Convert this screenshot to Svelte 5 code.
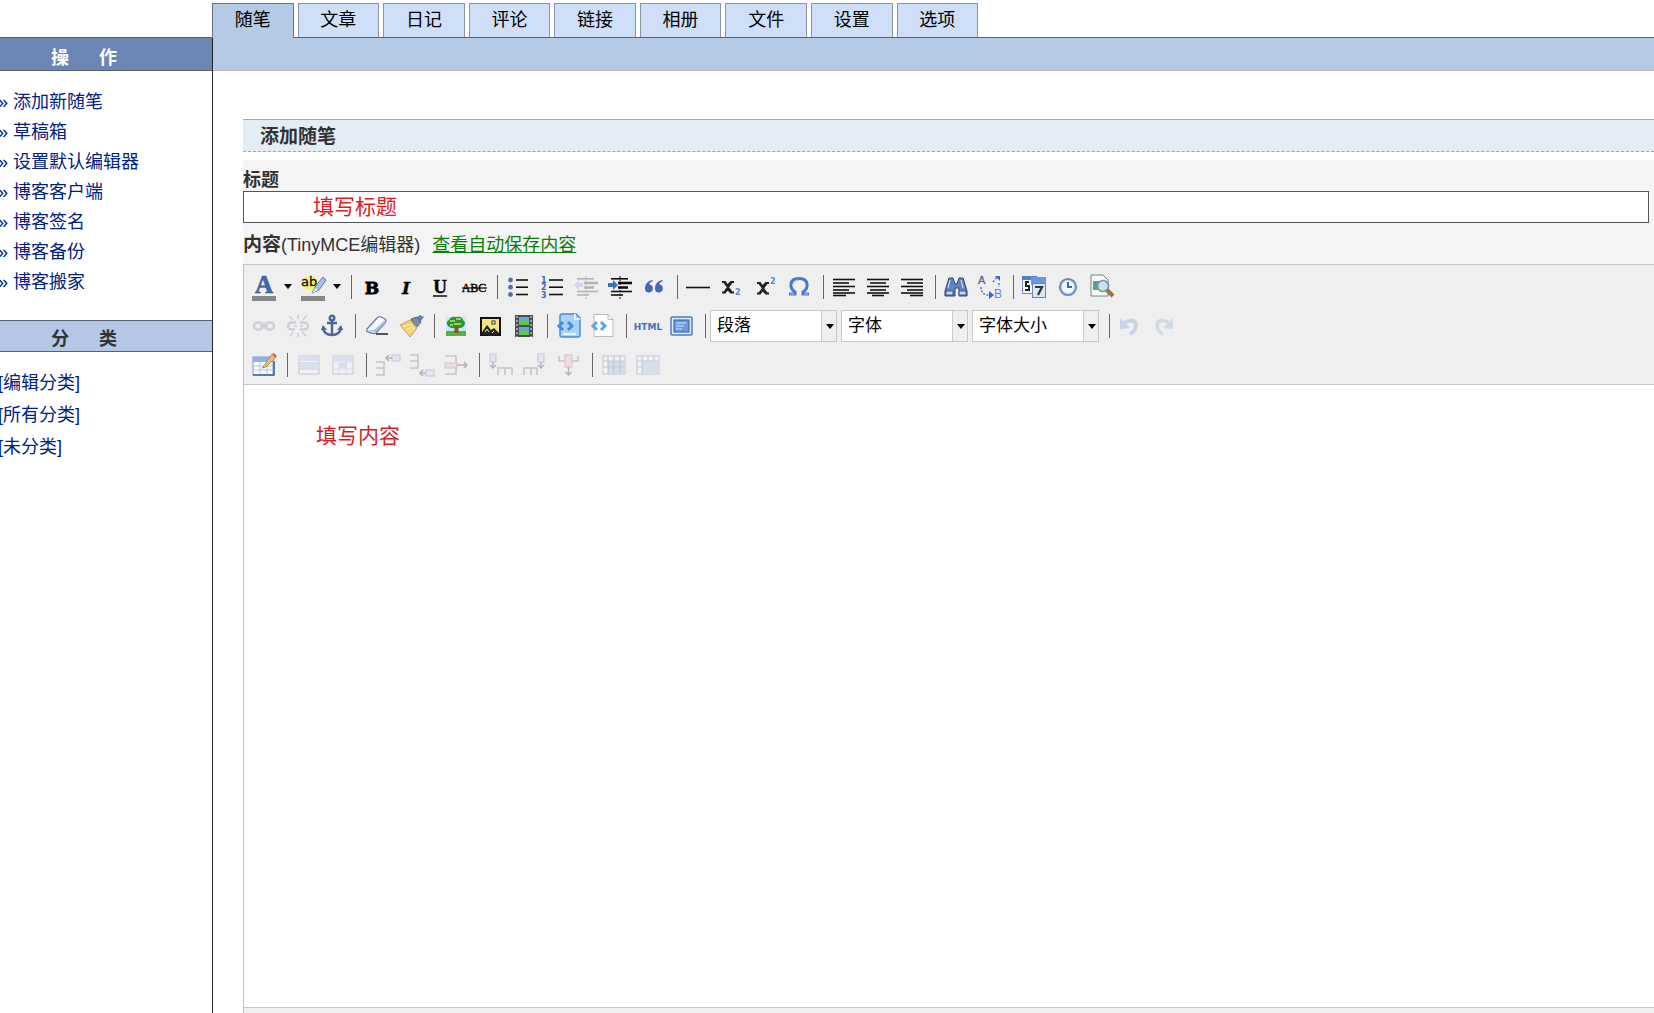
<script>
    const tabs = ["随笔", "文章", "日记", "评论", "链接", "相册", "文件", "设置", "选项"];
    const actions = ["添加新随笔", "草稿箱", "设置默认编辑器", "博客客户端", "博客签名", "博客备份", "博客搬家"];
    const categories = ["编辑分类", "所有分类", "未分类"];

    let active = $state("随笔");
    let title = $state("填写标题");
    let content = $state("填写内容");

    // shared bits of the toolbar icons
    const lines = (rows, color = "#111") =>
        rows.map(([x1, x2, y, w = 1.6]) => `<path d="M${x1} ${y}H${x2}" stroke="${color}" stroke-width="${w}"/>`).join("");
    const indentLines = (color) =>
        lines([[3, 20, 3.8], [10, 24, 8, 2.6], [10, 20, 12.5, 2.6], [3, 24, 16.5], [3, 15, 20]], color) +
        `<path d="M12 1V24" stroke="${color}" stroke-dasharray="2 1.5"/>`;
    const table = (x, y, w, h, fill) =>
        `<rect x="${x}" y="${y}" width="${w}" height="${h}" fill="${fill}" stroke="#c3c8d6"/>`;

    // every icon is drawn on a 24x24 grid
    const icons = {
        forecolor: `<text x="12" y="18" text-anchor="middle" font-family="Liberation Serif" font-weight="bold" font-size="25" fill="#4469a8" stroke="#31528f" stroke-width=".6">A</text><rect y="21" width="24" height="5" fill="#888"/>`,
        backcolor: `<ellipse cx="9" cy="8" rx="9" ry="7" fill="#f6f27a"/><text x="0" y="11" font-family="DejaVu Sans" font-size="13" fill="#111" stroke="#111" stroke-width=".3">ab</text><path d="M22 2L14 12l-3 6 7-3 7-10z" fill="#a9c0e6" stroke="#5876ad"/><path d="M11 18l3-5 3 2z" fill="#f4e9b0"/><rect y="21" width="24" height="5" fill="#888"/>`,
        bold: `<text x="12" y="19" text-anchor="middle" font-family="DejaVu Serif" font-weight="bold" font-size="17" stroke="#000" stroke-width=".8">B</text>`,
        italic: `<text x="12" y="19" text-anchor="middle" font-family="DejaVu Serif" font-weight="bold" font-style="italic" font-size="17" stroke="#000" stroke-width=".4">I</text>`,
        underline: `<text x="12" y="18" text-anchor="middle" font-family="Liberation Serif" font-weight="bold" font-size="19" stroke="#000" stroke-width=".4">U</text><path d="M5 21H19" stroke="#000" stroke-width="1.4"/>`,
        strike: `<text x="12" y="17" text-anchor="middle" font-family="Liberation Serif" font-size="12" stroke="#000" stroke-width=".4">ABC</text><path d="M0 13H25" stroke="#000" stroke-width="1.2"/>`,
        bullist: [5, 12.2, 19.5].map((y) => `<circle cx="4.5" cy="${y}" r="2.4" fill="#5a6ca8"/>`).join("") + lines([[10, 22, 5], [10, 22, 12.2], [10, 22, 19.5]]),
        numlist: [7.5, 15, 23].map((y, i) => `<text x="1" y="${y}" font-family="DejaVu Sans" font-weight="bold" font-size="8" fill="#4967ad">${i + 1}</text>`).join("") + lines([[9, 23, 5], [9, 23, 12.2], [9, 23, 19.5]]),
        outdent: indentLines("#b4b4b4") + `<path d="M0 10l5-5v3h4v4H5v3z" fill="#d3d7e6"/>`,
        indent: indentLines("#111") + `<path d="M10 10L5 5v3H0v4h5v3z" fill="#3f6fc0"/>`,
        quote: `<path d="M10.5 5C5 6 2.500 10 3 14.500a4 4 0 1 0 4.500-5C7 8 8 7 10.500 6.500zM20.500 5C15 6 12.500 10 13 14.500a4 4 0 1 0 4.500-5c-.5-1.500.5-2.500 3-3z" fill="#4468b4"/>`,
        hr: lines([[0, 24, 12.5]]),
        sub: `<path d="M2 7h3l2.500 3.500L11 7h3M2 17.500h3L7.500 14l3.500 3.500h3M4 7l8 10.500M12 7L4 17.500" fill="none" stroke="#222" stroke-width="2"/><text x="15" y="20" font-family="DejaVu Sans" font-weight="bold" font-size="8" fill="#5a86cc">2</text>`,
        sup: `<path d="M3 8h3l2.500 3.500L12 8h3M3 18.500h3l2.500-3.500 3.500 3.500h3M5 8l8 10.500M13 8L5 18.500" fill="none" stroke="#222" stroke-width="2"/><text x="16" y="9" font-family="DejaVu Sans" font-weight="bold" font-size="8" fill="#5a86cc">2</text>`,
        omega: `<path d="M1 19h6v-2C1 13 1 3.500 11 3.500S21 13 15 17v2h6" fill="none" stroke="#4a78c9" stroke-width="3"/><path d="M2 19h4M16 19h4M5 10c0-3 2-5 6-5" fill="none" stroke="#a4c3f2"/>`,
        left: lines([[1, 23, 4.5], [1, 17, 8], [1, 23, 11.5], [1, 17, 15], [1, 23, 18], [1, 14, 20.5]]),
        center: lines([[1, 23, 4.5], [4, 20, 8], [1, 23, 11.5], [4, 20, 15], [1, 23, 18], [6, 18, 20.5]]),
        right: lines([[1, 23, 4.5], [7, 23, 8], [1, 23, 11.5], [7, 23, 15], [1, 23, 18], [10, 23, 20.5]]),
        search: `<path d="M5 3h4l2 6h2l2-6h4l4 13v5h-8v-8h-4v8H1v-5z" fill="#6383be" stroke="#2c4370"/><path d="M2 16h7v4H2zM15 16h7v4h-7z" fill="#c4d9f6" stroke="#38568c"/><path d="M6 5L4 13M17 5l2 8" stroke="#dce9fb"/>`,
        replace: `<text x="0" y="9" font-family="Liberation Sans" font-size="11" fill="#5c6480" stroke="#5c6480" stroke-width=".3">A</text><text x="16" y="23" font-family="Liberation Sans" font-size="12" fill="#6986d8">B</text><path d="M3 12c0 6 3 8 8 8M21 8v4M15 7l4-5" fill="none" stroke="#5273d8" stroke-width="1.5" stroke-dasharray="2 1.5"/><path d="M17 1h5v5zM11 16l5 4-5 4z" fill="#3f62d1"/>`,
        date: `<rect x=".5" y="2.5" width="13" height="16" fill="#f5f8fd" stroke="#7890b8"/><path d="M0 1h15v4H0z" fill="#4f80cf"/><path d="M7 7H4v4h3v4H3" fill="none" stroke="#222" stroke-width="2"/><path d="M9 2h15v8H9z" fill="#6799e2"/><rect x="10.5" y="8.500" width="13" height="14" fill="#dde6f3" stroke="#7186aa"/><path d="M10 8V3h14v5" fill="#6799e2"/><path d="M13 12h7l-4 8" fill="none" stroke="#333" stroke-width="2.2"/>`,
        time: `<circle cx="12" cy="12" r="8" fill="#d9e9fc" stroke="#6c8cbc" stroke-width="2.2"/><circle cx="12" cy="12" r="5.5" fill="#f4f9ff"/><path d="M12 7v5h4" fill="none" stroke="#4165a2" stroke-width="2"/>`,
        preview: `<path d="M1 0h12l5 5v16H1z" fill="#f9fbfb" stroke="#6f8580"/><path d="M3 6h6v9H3z" fill="#5aa18d"/><circle cx="13" cy="11" r="5.5" fill="#c6e3ed" stroke="#82959e" stroke-width="1.6"/><path d="M17 15l6 6" stroke="#9b7440" stroke-width="4"/>`,
        link: `<g fill="none" stroke="#cdd0da" stroke-width="2.5"><rect x="2" y="8.5" width="9" height="7" rx="3.5"/><rect x="13" y="8.5" width="9" height="7" rx="3.5"/><path d="M8 12h8"/></g>`,
        unlink: `<g fill="none" stroke="#cdd0da" stroke-width="2.5"><path d="M10 8.5H5.500a3.500 3.500 0 0 0 0 7H9M14 8.500h4.500a3.500 3.500 0 0 1 0 7H14"/></g><path d="M7 6L3 2M12 5V1M17 6l4-5M7 18l-3 4M12 19v4M16 18l4 4M8 12h3M14 12h3" stroke="#cdd0d8" stroke-width="1.5"/>`,
        anchor: `<g fill="none" stroke="#4c6793" stroke-width="2.4"><circle cx="12" cy="4" r="2.3"/><path d="M12 6v15M7 9h10M3 14c0 4 4 7 9 7s9-3 9-7"/></g><path d="M1 16l2-5 4 5zM17 16l4-5 2 5z" fill="#4c6793"/>`,
        removeformat: `<path d="M2 15L12 4q2-2 4-1l4 2q2 1 0 4L11 19q-2 1-4 0l-4-1q-2-1-1-3z" fill="#f7faff" stroke="#637fae" stroke-width="1.3"/><path d="M3 16l6 0 11-10v3l-9 9-7-1z" fill="#a9c0e6"/><path d="M11 20H23" stroke="#222" stroke-width="1.5"/>`,
        cleanup: `<path d="M17 4l4-3 4 2-4 5z" fill="#6a7fac"/><path d="M12 5l6-2 4 5-5 6z" fill="#7b8ca8" stroke="#576580"/><path d="M1 11l10-5 7 8-7 9z" fill="#ecd27c" stroke="#cda754"/><path d="M4 13l9-3M7 16l8-4M10 19l6-5" stroke="#fff2b2"/>`,
        tree: `<rect x="2" y="2.5" width="20" height="19" fill="#c4e7fb"/><path d="M2 17h20v5H2z" fill="#54b640"/><path d="M4 12q-3-4 1-6 2-4 7-3 6-1 7 3 4 3 0 7-4 2-7 1-5 1-8-2z" fill="#36902d"/><path d="M6 7h5M12 5h5M10 10h7M6 11h3" stroke="#8bd760" stroke-width="2"/><path d="M11 12h3l1 7h-5z" fill="#85582d"/>`,
        image: `<rect x="3" y="4" width="19" height="17" fill="#f3e77b" stroke="#111" stroke-width="2"/><rect x="14" y="7" width="3" height="3" fill="#fff" stroke="#333"/><path d="M4 18l5-7 4 5 3-2 5 5v2H4z" fill="#222"/><path d="M7 18l2-3 2 3M14 19l2-2" stroke="#eee" fill="none"/>`,
        media: `<rect x="3" y="1" width="18" height="22" fill="#4b4e4c"/><path d="M7 3h10v8H7zM7 13h10v8H7z" fill="#5ba8e8"/><path d="M7 8q5-4 10 0v3H7zM7 18q5-4 10 0v3H7z" fill="#60c94b"/><path d="M5 2v21M19 2v21" stroke="#b9b9b9" stroke-width="1.5" stroke-dasharray="2 2"/>`,
        insertcode: `<path d="M3 2q0-2 2-2h14l4 4v18q0 1-2 1H5q-2 0-2-2z" fill="#a9d2f8" stroke="#4a88c9" stroke-width="1.4"/><path d="M18 0v5h5M6 20h13" fill="none" stroke="#e5f3ff" stroke-width="2"/><path d="M6 8l-4 4 4 4M11 8l4 4-4 4" fill="none" stroke="#468cda" stroke-width="3"/>`,
        code: `<path d="M3 .5h14l5 5v17H3z" fill="#fff" stroke="#b9bbbd"/><path d="M17 .5v5h5" fill="none" stroke="#b9bbbd"/><path d="M6 8l-4 4 4 4M10 8l4 4-4 4" fill="none" stroke="#5aa5e6" stroke-width="3"/>`,
        html: `<text x="12" y="16" text-anchor="middle" font-family="DejaVu Sans" font-weight="bold" font-size="9" fill="#4870b0">HTML</text>`,
        fullscreen: `<rect x="1" y="3" width="21" height="18" rx="1" fill="#dbe8fa" stroke="#567bb5" stroke-width="1.5"/><rect x="4" y="6" width="15" height="12" fill="#6c9ae2" stroke="#315da6"/><path d="M6 9h10M6 12h8M6 15h6" stroke="#accbfa" stroke-width="1.5"/>`,
        undo: `<path d="M5 9q11-6 12 2 0 6-6 9" fill="none" stroke="#c9d4e5" stroke-width="4"/><path d="M1 4v11l10-1z" fill="#c9d4e5"/>`,
        redo: `<path d="M17 9Q6 3 4 11q0 6 6 9" fill="none" stroke="#d0d9e5" stroke-width="3.5"/><path d="M20 4v11l-10-1z" fill="#d0d9e5"/>`,
        table: `<rect x="1" y="4" width="20" height="18" fill="#f8fbff" stroke="#7f99c8"/><path d="M1 4h20v5H1z" fill="#8fb0ec"/><path d="M1 13h20M1 17h20M8 9v13M15 9v13" stroke="#b3c8ec"/><path d="M1 22h21V8" fill="none" stroke="#46608c" stroke-width="1.6"/><path d="M11 14L20 1l4 3-10 10-4 1z" fill="#e1c266" stroke="#a08550" stroke-width=".8"/><path d="M20 1l2-1 3 3-2 2z" fill="#d4675e"/>`,
        rowprops: table(2, 3, 20, 18, "#f0f2f8") + `<path d="M2 3h20v5H2zM3 11h18v4H3z" fill="#dadfec"/><path d="M2 10h20M2 16h20" stroke="#c5cbe0"/>`,
        cellprops: table(2, 3, 20, 18, "#f0f2f8") + `<path d="M2 3h20v5H2zM8 10h8v5H8z" fill="#dadfec"/><path d="M2 9h20M2 16h20M8 9v12M15 9v12" stroke="#d8dce6"/>`,
        rowbefore: `<path d="M0 9h8v13H0M0 15h8" fill="none" stroke="#c6c6c6" stroke-width="1.6"/>` + table(16, 2, 8, 6, "#e2e5f2") + `<path d="M16 5h-6m3-3l-3 3 3 3" fill="none" stroke="#b5b5b5" stroke-width="1.5"/>`,
        rowafter: `<path d="M0 2h8v13H0M0 8h8" fill="none" stroke="#c6c6c6" stroke-width="1.6"/>` + table(16, 17, 8, 6, "#e2e5f2") + `<path d="M16 20h-6m3-3l-3 3 3 3" fill="none" stroke="#b5b5b5" stroke-width="1.5"/>`,
        rowdelete: `<path d="M1 3h11v18H1" fill="none" stroke="#c6c6c6" stroke-width="1.6"/><rect x="1" y="10" width="12" height="5" fill="#efdcdd" stroke="#d6c3c5"/><path d="M13 12h10m-3-3l3 3-3 3" fill="none" stroke="#c0adb0" stroke-width="1.5"/>`,
        colbefore: `<path d="M9 22v-7h14v7M16 15v7" fill="none" stroke="#c6c6c6" stroke-width="1.6"/>` + table(1, 1, 6, 8, "#dfe4f6") + `<path d="M4 9v6m-3-3l3 3 3-3" fill="none" stroke="#b5b5b5" stroke-width="1.5"/>`,
        colafter: `<path d="M1 22v-7h13v7M8 15v7" fill="none" stroke="#c6c6c6" stroke-width="1.6"/>` + table(15, 1, 6, 8, "#e2e5f2") + `<path d="M18 9v6m-3-3l3 3 3-3" fill="none" stroke="#b5b5b5" stroke-width="1.5"/>`,
        coldelete: `<path d="M2 3v5h19V3" fill="none" stroke="#c6c6c6" stroke-width="1.6"/><rect x="8" y="2" width="7" height="12" fill="#efdcdd" stroke="#d6c3c5"/><path d="M11.500 14v8m-3-3l3 3 3-3" fill="none" stroke="#b5b5b5" stroke-width="1.5"/>`,
        split: table(1, 3, 22, 18, "#f2f3f5") + `<path d="M6 8h17v12H6z" fill="#d3ddea"/><path d="M1 8h22M1 14h22M6 3v18M12 3v18M18 3v18" stroke="#c4c8ce" stroke-width="1.2"/>`,
        merge: table(1, 3, 22, 18, "#f2f3f5") + `<path d="M6 8h17v12H6z" fill="#d6e0ed"/><path d="M1 8h22M6 3v18M12 3v5M18 3v5M1 14h5" stroke="#c8ccd2" stroke-width="1.2"/>`
    };

    // "|" is a separator, "+name" a button with its own drop-down arrow
    const rows = [
        "+forecolor +backcolor | bold italic underline strike | bullist numlist outdent indent quote | hr sub sup omega | left center right | search replace | date time preview",
        "link unlink anchor | removeformat cleanup | tree image media | insertcode code | html fullscreen | =段落 =字体 =字体大小 | undo redo",
        "table | rowprops cellprops | rowbefore rowafter rowdelete | colbefore colafter coldelete | split merge"
    ].map((row) => row.split(" "));
</script>

{#snippet tool(name)}
    <button class="tool" type="button" aria-label={name}>
        <svg viewBox="0 0 24 24" width="24" height="24">{@html icons[name]}</svg>
    </button>
{/snippet}

<div class="page">
    <nav class="tabs">
        {#each tabs as tab}
            <a href="#{tab}" class:active={tab === active} onclick={() => (active = tab)}>{tab}</a>
        {/each}
    </nav>

    <div class="columns">
        <aside>
            <h2 class="actions"><span>操</span><span>作</span></h2>
            <ul class="actionList">
                {#each actions as item}
                    <li><a href="#{item}">» {item}</a></li>
                {/each}
            </ul>
            <h2 class="sorts"><span>分</span><span>类</span></h2>
            <ul class="sortList">
                {#each categories as item}
                    <li><a href="#{item}">[{item}]</a></li>
                {/each}
            </ul>
        </aside>

        <main>
            <div class="bar"></div>
            <div class="content">
                <h1>添加随笔</h1>
                <form>
                    <label class="titleLabel" for="title">标题</label>
                    <input id="title" type="text" bind:value={title} />

                    <div class="bodyLabel">
                        <label for="body"><b>内容</b>(TinyMCE编辑器)</label>
                        <a href="#autosave">查看自动保存内容</a>
                    </div>

                    <div class="editor">
                        <div class="toolbar">
                            {#each rows as row}
                                <div class="row">
                                    {#each row as item}
                                        {#if item === "|"}
                                            <span class="sep"></span>
                                        {:else if item[0] === "="}
                                            <span class="list">
                                                <select aria-label={item.slice(1)}>
                                                    <option>{item.slice(1)}</option>
                                                </select>
                                            </span>
                                        {:else if item[0] === "+"}
                                            {@render tool(item.slice(1))}
                                            <button class="open" type="button" aria-label="open {item.slice(1)}"></button>
                                        {:else}
                                            {@render tool(item)}
                                        {/if}
                                    {/each}
                                </div>
                            {/each}
                        </div>
                        <textarea id="body" bind:value={content}></textarea>
                        <div class="status"></div>
                    </div>
                </form>
            </div>
        </main>
    </div>
</div>

<style>
:global(body) {
    margin: 0;
    background: #fff;
}

.page {
    display: flex;
    flex-direction: column;
    min-height: 100vh;
    font-family: "Liberation Sans", "Noto Sans CJK SC", sans-serif;
    font-size: 18px;
    color: #333;
}

a {
    color: #002280;
    text-decoration: none;
}

ul {
    list-style: none;
    margin: 0 0 0 -2px;
    padding: 0;
}

/* TABS */
.tabs {
    display: flex;
    gap: 4px;
    width: 766px;
    padding: 3px 0 0 212px;
}

.tabs a {
    flex: 1;
    height: 33px;
    line-height: 33px;
    text-align: center;
    color: #000;
    background: #cfdff7;
    border: 1px solid #8c949c;
    border-bottom: 0;
}

.tabs .active {
    background: #b5cae6;
    border-color: #67757f;
    margin-bottom: -1px;
    padding-bottom: 1px;
    z-index: 1;
}

.columns {
    flex: 1;
    display: flex;
}

/* SIDEBAR */
aside {
    flex: none;
    width: 212px;
    border-right: 1px solid #222;
}

h2 {
    display: flex;
    gap: 30px;
    margin: 0;
    padding-left: 51px;
    font-size: 18px;
    border-top: 1px solid #566274;
    border-bottom: 1px solid #566274;
}

.actions {
    height: 32px;
    line-height: 40px;
    color: #fff;
    background: #6b86b3;
}

.sorts {
    height: 30px;
    line-height: 36px;
    background: #b5c7e6;
}

.actionList {
    padding: 16px 0 23px;
}

.actionList li {
    line-height: 30px;
}

.sortList {
    padding-top: 15px;
}

.sortList li {
    line-height: 32px;
}

/* MAIN */
main {
    flex: 1;
    min-width: 0;
    display: flex;
    flex-direction: column;
}

.bar {
    height: 32px;
    background: #b5cae6;
    border-top: 1px solid #566274;
    border-bottom: 1px solid #b3b5c6;
}

.content {
    flex: 1;
    display: flex;
    flex-direction: column;
    padding: 48px 0 0 30px;
}

h1 {
    height: 31px;
    margin: 0 0 8px;
    padding-left: 17px;
    font-size: 19px;
    line-height: 33px;
    background: #e4ecf5;
    border-top: 1px solid #a3a8ae;
    border-bottom: 1px dashed #a0a8aa;
}

form {
    flex: 1;
    display: flex;
    flex-direction: column;
    background: #f5f5f5;
}

.titleLabel {
    padding-top: 9px;
    font-weight: bold;
    line-height: 22px;
}

#title {
    height: 32px;
    margin-right: 5px;
    padding: 0 0 4px 69px;
    box-sizing: border-box;
    font: 21px "Liberation Sans", "Noto Sans CJK SC", sans-serif;
    color: #e01b22;
    background: #fff;
    border: 1px solid #555;
    outline: none;
}

.bodyLabel {
    display: flex;
    align-items: baseline;
    gap: 12px;
    height: 41px;
    padding-top: 7px;
    box-sizing: border-box;
    line-height: 30px;
}

.bodyLabel b {
    font-size: 19px;
}

.bodyLabel a {
    color: #0a7d0a;
    text-decoration: underline;
}

/* EDITOR */
.editor {
    flex: 1;
    display: flex;
    flex-direction: column;
    border-top: 1px solid #c8c8c8;
    border-left: 1px solid #c0c0c0;
}

.toolbar {
    padding: 2px 0 0 3px;
    background: #efefef;
    border-bottom: 1px solid #c8c8c8;
}

.row {
    display: flex;
    align-items: center;
    height: 39px;
}

.tool {
    flex: none;
    display: flex;
    justify-content: center;
    align-items: center;
    width: 34px;
    height: 34px;
    padding: 0;
    background: none;
    border: 0;
    cursor: pointer;
}

.tool svg {
    overflow: visible;
}

.open {
    width: 15px;
    height: 34px;
    padding: 0 3px;
    background: none;
    border: 0;
}

.open::before,
.list::after {
    content: "";
    display: block;
    width: 0;
    border: 4px solid transparent;
    border-top: 5px solid #000;
    border-bottom: 0;
}

.sep {
    width: 1px;
    height: 24px;
    margin: 0 4px 0 6px;
    background: #666;
}

.row:first-child .sep {
    margin-right: 3px;
}

.list {
    position: relative;
    margin-right: 4px;
}

.list select {
    appearance: none;
    display: block;
    width: 127px;
    height: 32px;
    padding: 0 16px 0 6px;
    font: 17px "Liberation Sans", "Noto Sans CJK SC", sans-serif;
    color: #000;
    background: linear-gradient(to left, #efefef 14px, #ccc 14px, #ccc 15px, #fff 15px);
    border: 1px solid #c8c8c8;
    border-radius: 0;
}

.list::after {
    position: absolute;
    right: 3px;
    top: 14px;
    pointer-events: none;
}

textarea {
    flex: 1;
    padding: 34px 72px;
    font: 21px/34px "Liberation Sans", "Noto Sans CJK SC", sans-serif;
    color: #d01f2b;
    background: #fff;
    border: 0;
    outline: none;
    resize: none;
}

.status {
    height: 5px;
    background: #efefef;
    border-top: 1px solid #c8c8c8;
}
</style>
